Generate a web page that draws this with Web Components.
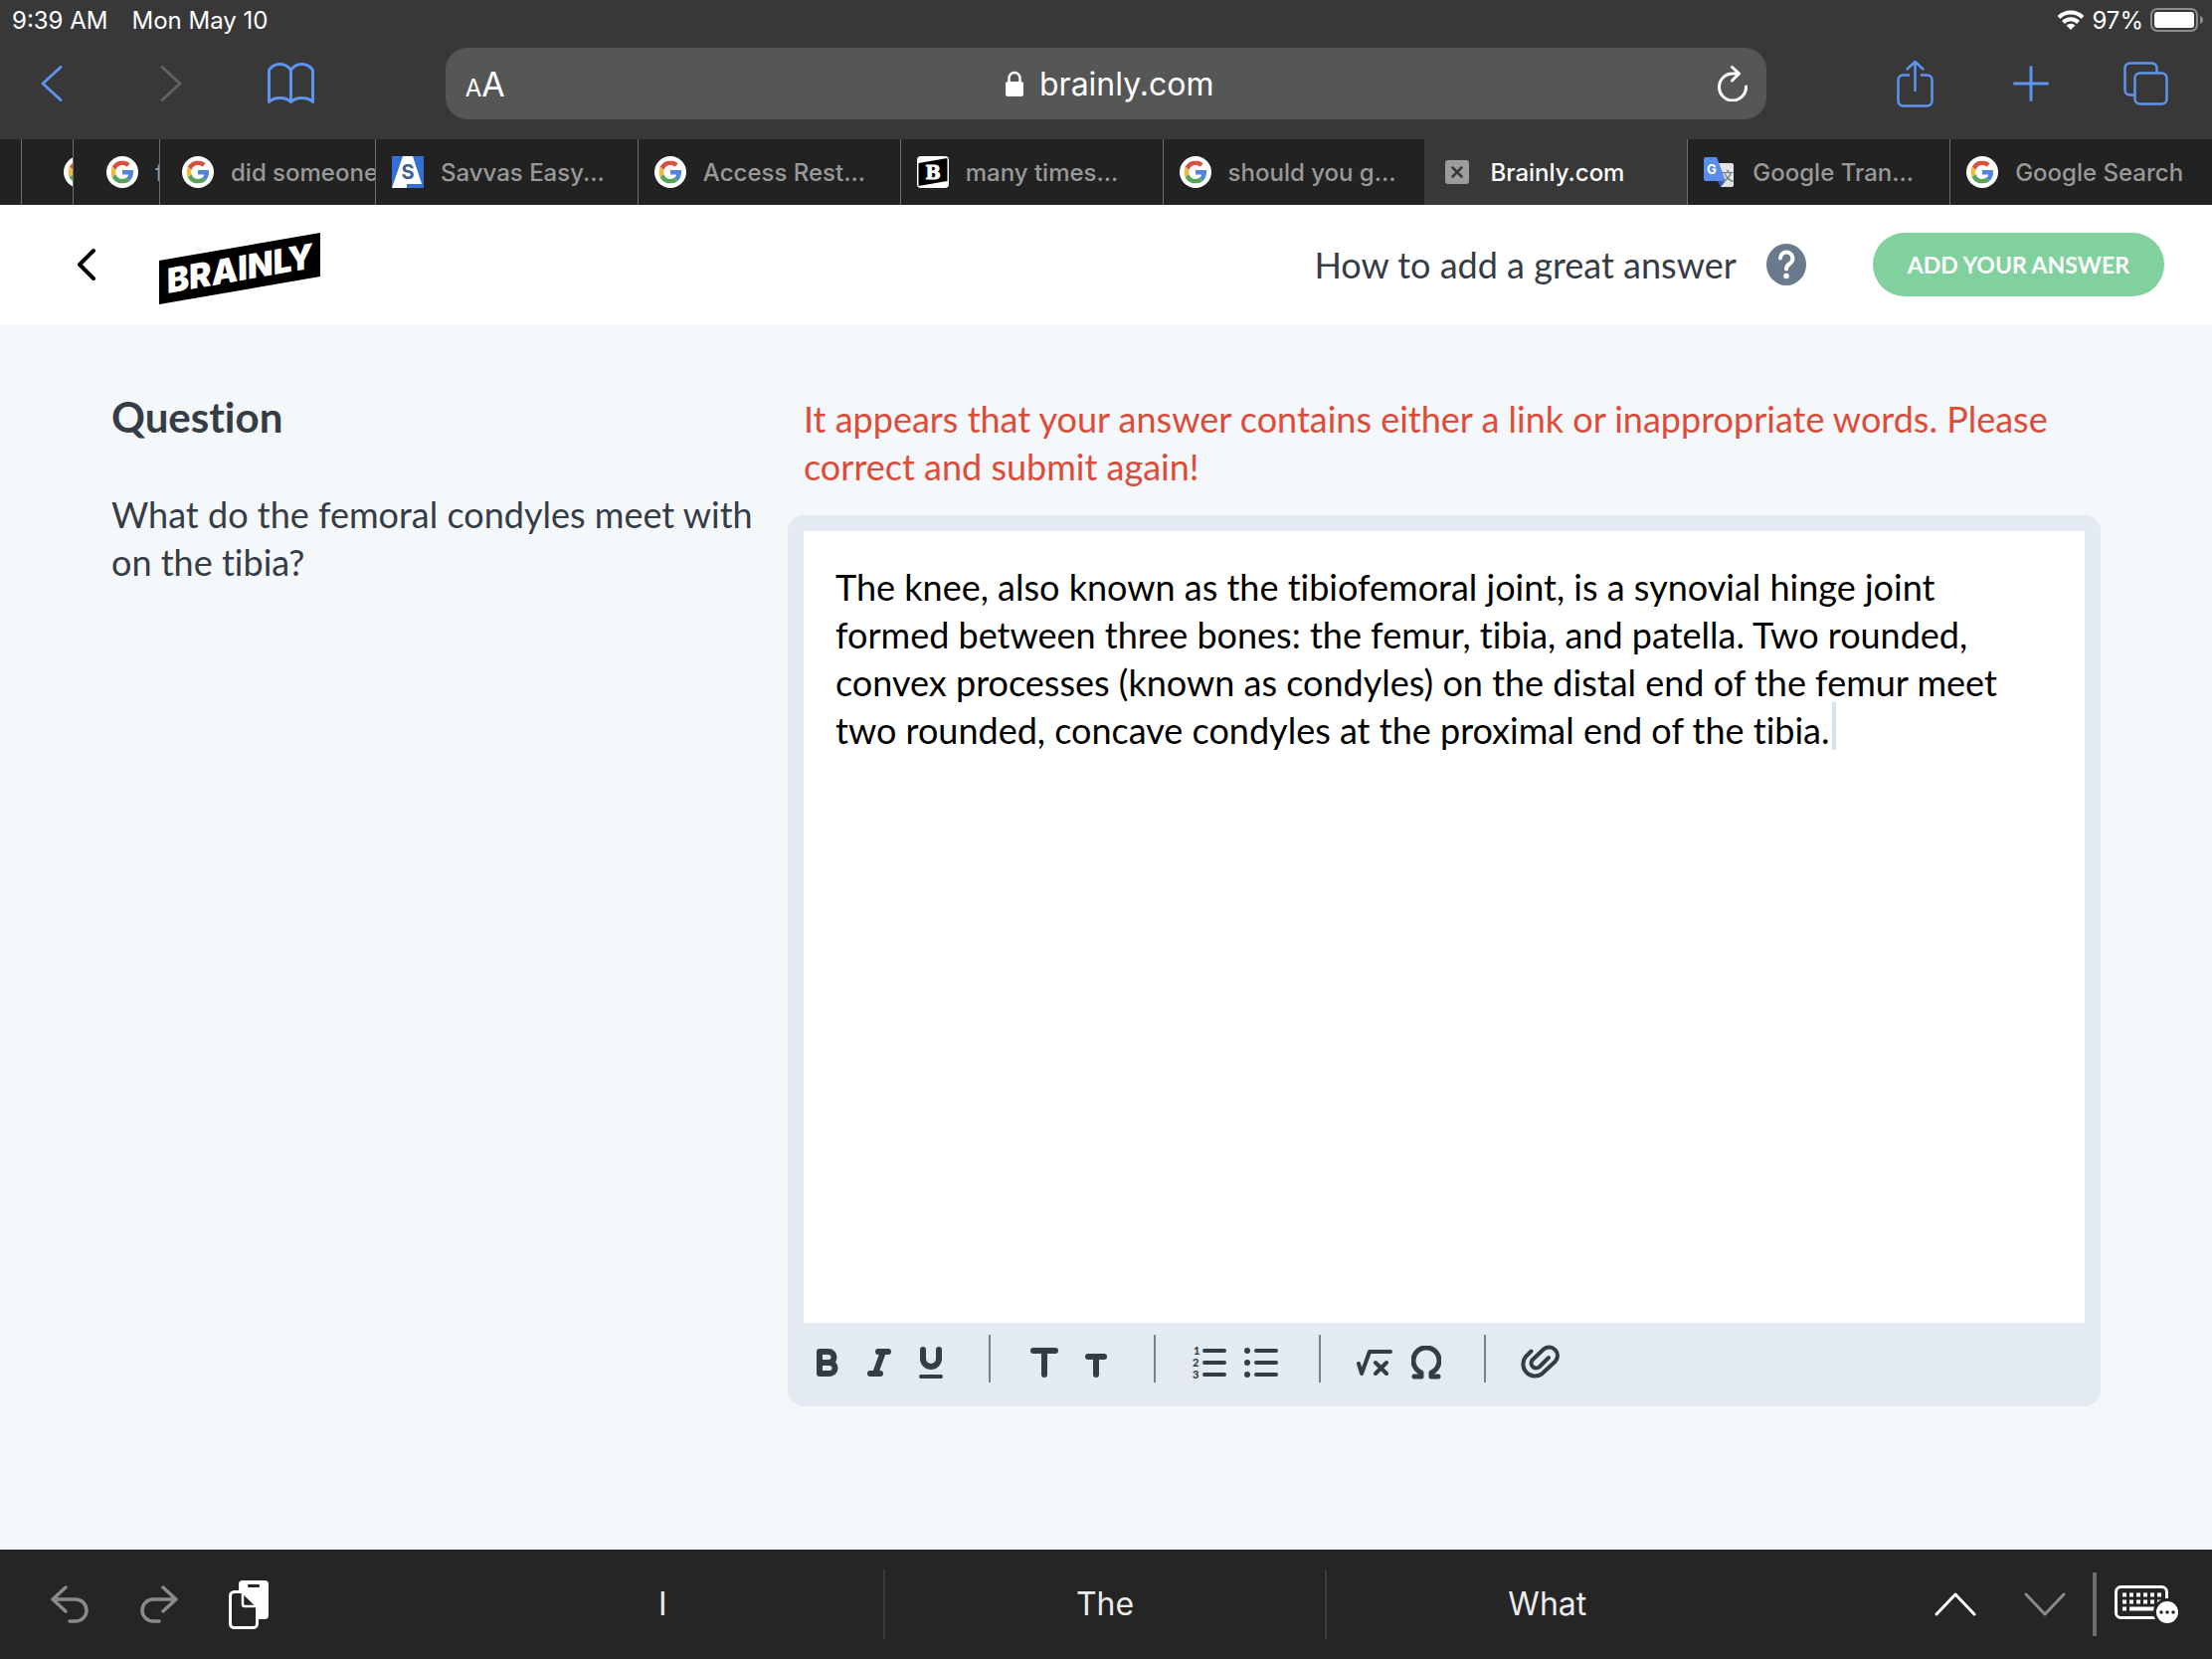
<!DOCTYPE html>
<html lang="en">
<head>
<meta charset="utf-8">
<meta name="viewport" content="width=device-width, initial-scale=1">
<title>Brainly.com</title>
<style>
	html, body {
		height: 100%;
	}

	body {
		margin: 0;
		display: flex;
		flex-direction: column;
		background: #f4f8fb;
		color: #353c46;
		font-family: Inter, "Liberation Sans", sans-serif;
	}
</style>
</head>
<body>
	<status-bar time="9:39 AM" date="Mon May 10" battery="97%"></status-bar>
	<browser-toolbar url="brainly.com"></browser-toolbar>
	<tab-strip>
		<browser-tab style="--width: 21px"></browser-tab>
		<browser-tab icon="google" style="--width: 52px; --inset: 42px"></browser-tab>
		<browser-tab icon="google" style="--width: 87px; --inset: 33px">f</browser-tab>
		<browser-tab icon="google" style="--width: 217px; --inset: 22px">did someone</browser-tab>
		<browser-tab icon="savvas">Savvas Easy...</browser-tab>
		<browser-tab icon="google">Access Rest...</browser-tab>
		<browser-tab icon="brainly">many times...</browser-tab>
		<browser-tab icon="google">should you g...</browser-tab>
		<browser-tab icon="close" active>Brainly.com</browser-tab>
		<browser-tab icon="translate">Google Tran...</browser-tab>
		<browser-tab icon="google">Google Search</browser-tab>
	</tab-strip>
	<site-header></site-header>
	<answer-page>
		<span slot="title">Question</span>
		<span slot="question">What do the femoral condyles meet with on the tibia?</span>
		<span slot="error">It appears that your answer contains either a link or inappropriate words. Please correct and submit again!</span>
		<answer-editor slot="editor" value="The knee, also known as the tibiofemoral joint, is a synovial hinge joint formed between three bones: the femur, tibia, and patella. Two rounded, convex processes (known as condyles) on the distal end of the femur meet two rounded, concave condyles at the proximal end of the tibia."></answer-editor>
	</answer-page>
	<shortcut-bar>
		<span>I</span>
		<span>The</span>
		<span>What</span>
	</shortcut-bar>

<script>
// [width, height, markup], drawn with currentColor strokes unless stated
const ICONS = {
	back: [22, 36, '<path d="M20 1.5 2 18 20 34.5" stroke-width="3"/>'],
	forward: [22, 36, '<path d="M2 1.5 20 18 2 34.5" stroke-width="3"/>'],
	book: [47, 42, '<path d="M1.5 39.5V7.5Q5.5 1.5 12.5 1.5T23.5 7.5Q27.5 1.5 34.5 1.5T45.5 7.5V39.5Q41.5 35.5 34.5 35.5T23.5 39.5Q19.5 35.5 12.5 35.5T1.5 39.5ZM23.5 7.5V39.5" stroke-width="3"/>'],
	lock: [18, 26, '<path d="M3.5 13V7.5a5.5 5.5 0 0 1 11 0V13" stroke-width="2.5"/><rect y="11" width="18" height="15" rx="2.5" fill="currentColor" stroke="none"/>'],
	reload: [30, 36, '<path d="M28.5 21A13.5 13.5 0 1 1 15 8H21M14.5 1.5 21.5 8 14.5 15" stroke-width="3"/>'],
	share: [37, 48, '<path d="M12 15.5H6.5a5 5 0 0 0-5 5V41.5a5 5 0 0 0 5 5H30.5a5 5 0 0 0 5-5V20.5a5 5 0 0 0-5-5H25M18.5 31V2M10.5 9.5 18.5 2 26.5 9.5"/>'],
	plus: [36, 36, '<path d="M18 1.5V34.5M1.5 18H34.5" stroke-width="3"/>'],
	tabs: [45, 44, '<rect x="11.5" y="11.5" width="32" height="31" rx="5"/><path d="M11 33.5H6.5a5 5 0 0 1-5-5V6.5a5 5 0 0 1 5-5H28.5a5 5 0 0 1 5 5V11"/>'],
	wifi: [28, 20, '<path d="M2 7.5A17 17 0 0 1 26 7.5M6.5 12.5A10.5 10.5 0 0 1 21.5 12.5" stroke-width="4" stroke-linecap="butt"/><path d="M14 20 9.5 15.5a6.5 6.5 0 0 1 9 0z" fill="currentColor" stroke="none"/>'],
	battery: [54, 24, '<rect x="1" y="1" width="46" height="22" rx="6" stroke="#8c8c8c" stroke-width="2"/><rect x="4" y="4" width="40" height="16" rx="3" fill="currentColor" stroke="none"/><path d="M50 8q3 1 3 4t-3 4z" fill="#8c8c8c" stroke="none"/>'],
	google: [32, 32, '<circle cx="16" cy="16" r="16" fill="#fff" stroke="none"/><svg x="4.5" y="4.5" width="23" height="23" viewBox="0 0 48 48" stroke="none"><path fill="#d9503f" d="M24 9.5c3.54 0 6.71 1.22 9.21 3.6l6.85-6.85C35.9 2.38 30.47 0 24 0 14.62 0 6.51 5.38 2.56 13.22l7.98 6.19C12.43 13.72 17.74 9.5 24 9.5z"/><path fill="#4f84df" d="M46.98 24.55c0-1.57-.15-3.09-.38-4.55H24v9.02h12.94c-.58 2.96-2.26 5.48-4.78 7.18l7.73 6c4.51-4.18 7.09-10.36 7.09-17.65z"/><path fill="#eebb3c" d="M10.53 28.59c-.48-1.45-.76-2.99-.76-4.59s.27-3.14.76-4.59l-7.98-6.19C.92 16.46 0 20.12 0 24c0 3.88.92 7.54 2.56 10.78l7.97-6.19z"/><path fill="#55a45a" d="M24 48c6.48 0 11.93-2.13 15.89-5.81l-7.73-6c-2.15 1.45-4.92 2.3-8.16 2.3-6.26 0-11.57-4.22-13.47-9.91l-7.98 6.19C6.51 42.62 14.62 48 24 48z"/></svg>'],
	savvas: [32, 32, '<g stroke="none"><rect width="32" height="32" fill="#3470d6"/><path fill="#fff" d="M11 0h10l9 28H15v4H0z"/><text x="16" y="23" text-anchor="middle" font-size="20" font-weight="700" fill="#3f5f96">S</text></g>'],
	brainly: [32, 32, '<g stroke="none"><rect width="32" height="32" rx="4" fill="#fff"/><path fill="#000" d="M1.5 7 30.5 2V25L1.5 30z"/><text x="16" y="23" text-anchor="middle" font-family="DejaVu Serif, serif" font-size="18" font-weight="700" fill="#fff" stroke="#fff" stroke-width="1">B</text></g>'],
	close: [32, 32, '<rect x="4" y="4" width="24" height="24" rx="3" fill="#9c9c9c" stroke="none"/><path d="m11.5 11.5 9 9m0-9-9 9" stroke="#383838"/>'],
	translate: [32, 32, '<g stroke="none"><path fill="#e4e4e4" d="M15 7h13a2 2 0 0 1 2 2V29a2 2 0 0 1-2 2H17z"/><path fill="#3c55b8" d="M14 25h8l-5 6z"/><path fill="#5a8cec" d="M2 1H13L22 25H2a2 2 0 0 1-2-2V3a2 2 0 0 1 2-2z"/><text x="3" y="18" font-size="13" font-weight="700" fill="#fff">G</text><text x="18" y="25" font-family="Noto Sans CJK SC, sans-serif" font-size="12" fill="#6c7a80">文</text></g>'],
	chevron: [20, 34, '<path d="M17 3 3 17 17 31" stroke-width="4"/>'],
	help: [40, 42, '<ellipse cx="20" cy="21" rx="20" ry="21" fill="currentColor" stroke="none"/><path d="M14 14.5a6.2 6.2 0 1 1 9.5 5.5c-2 1.4-3.5 2.6-3.5 5.5" stroke="#fff" stroke-width="4"/><circle cx="20" cy="32.5" r="2.8" fill="#fff" stroke="none"/>'],
	bold: [22, 28, '<path d="M3 3V25H13A5.5 5.5 0 0 0 13 14H3M3 3H12A5.5 5.5 0 0 1 12 14" stroke-width="6"/>'],
	italic: [24, 28, '<path d="M11 3H21M3 25H13M16 3 8 25" stroke-width="6"/>'],
	underline: [24, 32, '<path d="M4 3V12a8 8 0 0 0 16 0V3" stroke-width="6"/><path d="M2 30H22" stroke-width="4"/>'],
	big: [28, 30, '<path d="M3 3H25M14 3V27" stroke-width="6"/>'],
	small: [22, 30, '<path d="M3 9H19M11 9V27" stroke-width="6"/>'],
	numbers: [34, 34, '<path d="M12 5H32M12 17H32M12 29H32" stroke-width="4"/><g fill="currentColor" stroke="none" font-size="11" font-weight="900"><text x="1" y="9">1</text><text y="21">2</text><text y="33">3</text></g>'],
	bullets: [34, 34, '<path d="M12 5H32M12 17H32M12 29H32" stroke-width="4"/><path d="M3 5h0M3 17h0M3 29h0" stroke-width="6"/>'],
	root: [36, 30, '<path d="M2 16 5 26 13 4H34M19 15 30 26M30 15 19 26" stroke-width="4"/>'],
	omega: [30, 34, '<path d="M3 31H10V27A13 13 0 1 1 20 27V31H27" stroke-width="5"/>'],
	clip: [40, 36, '<path d="M11.5 6.5 6 12A12 12 0 0 0 22 29.5L35.5 17A8.5 8.5 0 0 0 24 4.5L12.5 15.5A5 5 0 0 0 19.5 22.5L29 13" stroke-width="4"/>'],
	undo: [38, 38, '<path d="M15 2 2 14 15 26M2 14H25a11 11 0 0 1 0 22H19" stroke-width="3.5"/>'],
	redo: [38, 38, '<path d="M23 2 36 14 23 26M36 14H13a11 11 0 0 0 0 22H19" stroke-width="3.5"/>'],
	paste: [40, 49, '<rect x="10" width="30" height="39" rx="4" fill="currentColor" stroke="none"/><rect x="19" y="4" width="12" height="3" rx="1" fill="#252525" stroke="none"/><path d="M5.5 11.5H14L28.5 26V43.5a4 4 0 0 1-4 4H5.5a4 4 0 0 1-4-4V15.5a4 4 0 0 1 4-4z" fill="#252525" stroke-width="3"/><path d="M14 12V24a2 2 0 0 0 2 2H28"/>'],
	up: [42, 24, '<path d="M2 22 21 2 40 22" stroke-width="3"/>'],
	down: [42, 24, '<path d="M2 2 21 22 40 2" stroke-width="3"/>'],
	keyboard: [65, 40, '<rect x="1.5" y="2.5" width="51" height="31" rx="5" stroke-width="3"/><path d="M8 10.5H48M8 17.5H48" stroke-width="4" stroke-dasharray="4 3" stroke-linecap="butt"/><path d="M8 24.5h4M15 24.5H41" stroke-width="4" stroke-linecap="butt"/><circle cx="53" cy="28" r="14" fill="#252525" stroke="none"/><circle cx="53" cy="28" r="11" fill="currentColor" stroke="none"/><path d="M47 28h0M53 28h0M59 28h0" stroke="#252525" stroke-width="3.5"/>']
}

class BaseElement extends HTMLElement {
	connectedCallback() {
		if (this.shadowRoot) {
			return
		}

		const root = this.attachShadow({mode: 'open'})
		root.innerHTML = `<style>
			:host, * {box-sizing: border-box}

			button {
				margin: 0;
				padding: 0;
				border: 0;
				background: none;
				color: inherit;
				font: inherit;
				cursor: pointer;
			}

			${this.styles()}
		</style>${this.markup()}`
	}
}

class UiIcon extends BaseElement {
	styles() {
		return `
			:host {
				display: inline-flex;
				flex: none;
			}
		`
	}

	markup() {
		const [width, height, shapes] = ICONS[this.getAttribute('name')]

		return `
			<svg
				width="${width}"
				height="${height}"
				viewBox="0 0 ${width} ${height}"
				fill="none"
				stroke="currentColor"
				stroke-width="2.5"
				stroke-linecap="round"
				stroke-linejoin="round"
				aria-hidden="true"
			>${shapes}</svg>
		`
	}
}

// Button around one icon, size comes from --w and --h
class IconButton extends BaseElement {
	styles() {
		return `
			:host {
				display: block;
				flex: none;
			}

			button {
				display: flex;
				align-items: center;
				justify-content: center;
				width: var(--w, 56px);
				height: var(--h, 72px);
			}
		`
	}

	markup() {
		return `
			<button type="button" aria-label="${this.getAttribute('label')}">
				<ui-icon name="${this.getAttribute('icon')}"></ui-icon>
			</button>
		`
	}
}

class StatusBar extends BaseElement {
	styles() {
		return `
			:host {
				display: flex;
				flex: none;
				align-items: center;
				gap: 24px;
				height: 40px;
				padding: 0 8px 0 12px;
				background: #383838;
				color: #fff;
				font-size: 24px;
			}

			.right {
				display: flex;
				align-items: center;
				gap: 7px;
				margin-left: auto;
			}
		`
	}

	markup() {
		return `
			<span>${this.getAttribute('time')}</span>
			<span>${this.getAttribute('date')}</span>
			<div class="right">
				<ui-icon name="wifi"></ui-icon>
				<span>${this.getAttribute('battery')}</span>
				<ui-icon name="battery"></ui-icon>
			</div>
		`
	}
}

class BrowserToolbar extends BaseElement {
	styles() {
		return `
			:host {
				display: grid;
				flex: none;
				grid-template-columns: 1fr 3fr 1fr;
				padding: 8px 0 20px;
				background: #383838;
				color: #5f94ee;
			}

			.left, .right {
				display: flex;
				gap: 60px;
			}

			.left {
				padding-left: 24px;
				gap: 64px;
			}

			.right {
				justify-content: flex-end;
				padding-right: 38px;
			}

			.disabled {
				color: #636363;
			}

			.field {
				display: grid;
				grid-template-columns: 1fr auto 1fr;
				align-items: center;
				margin: 0 3px;
				padding: 0 4px 0 20px;
				border-radius: 22px;
				background: #555756;
				color: #fff;
			}

			.size {
				justify-self: start;
				font-size: 34px;
			}

			.size small {
				font-size: 24px;
			}

			.address {
				display: flex;
				align-items: center;
				gap: 16px;
			}

			input {
				width: 184px;
				padding: 0;
				border: 0;
				outline: 0;
				background: none;
				color: inherit;
				font: 32px Inter, sans-serif;
			}

			.reload {
				justify-self: end;
				--w: 60px;
			}
		`
	}

	markup() {
		return `
			<div class="left">
				<icon-button icon="back" label="Back"></icon-button>
				<icon-button class="disabled" icon="forward" label="Forward"></icon-button>
				<icon-button icon="book" label="Bookmarks"></icon-button>
			</div>
			<div class="field">
				<button class="size" type="button"><small>A</small>A</button>
				<label class="address">
					<ui-icon name="lock"></ui-icon>
					<input type="text" aria-label="Address" value="${this.getAttribute('url')}">
				</label>
				<icon-button class="reload" icon="reload" label="Reload"></icon-button>
			</div>
			<div class="right">
				<icon-button icon="share" label="Share"></icon-button>
				<icon-button icon="plus" label="New tab"></icon-button>
				<icon-button icon="tabs" label="All tabs"></icon-button>
			</div>
		`
	}
}

class TabStrip extends BaseElement {
	styles() {
		return `
			:host {
				display: flex;
				flex: none;
				height: 66px;
				background: #222;
				overflow: hidden;
			}
		`
	}

	markup() {
		return '<slot></slot>'
	}
}

class BrowserTab extends BaseElement {
	styles() {
		return `
			:host {
				display: block;
				flex: 1 0 var(--width, 0);
				max-width: var(--width, none);
				min-width: 0;
				overflow: hidden;
				border-left: 1px solid #6e6e6e;
				color: #999;
			}

			:host(:first-child) {
				border-left: 0;
			}

			:host([active]) {
				border-color: #383838;
				background: #383838;
				color: #fff;
			}

			button {
				display: flex;
				align-items: center;
				gap: 17px;
				width: 100%;
				height: 100%;
				padding-left: var(--inset, 16px);
				font-size: 24px;
				font-weight: 500;
				white-space: nowrap;
			}
		`
	}

	markup() {
		const icon = this.getAttribute('icon')

		if (!icon) {
			return ''
		}

		return `<button type="button"><ui-icon name="${icon}"></ui-icon><slot></slot></button>`
	}
}

class SiteHeader extends BaseElement {
	styles() {
		return `
			:host {
				display: flex;
				flex: none;
				align-items: center;
				height: 121px;
				padding: 0 48px 2px 64px;
				background: #fff;
				font-family: Lato, sans-serif;
			}

			.back {
				--w: 46px;
				color: #000;
			}

			.logo {
				display: flex;
				margin: 8px 0 0 50px;
			}

			.logo text {
				font: italic 900 34px Inter, sans-serif;
			}

			.how {
				display: flex;
				align-items: center;
				gap: 30px;
				margin-left: auto;
				color: inherit;
				font-size: 36px;
				text-decoration: none;
			}

			.how ui-icon {
				color: #6a7a8c;
			}

			.submit {
				height: 64px;
				margin-left: 67px;
				padding: 0 35px;
				border-radius: 32px;
				background: #80d19e;
				color: #fff;
				font-size: 23px;
				font-weight: 700;
			}
		`
	}

	markup() {
		return `
			<icon-button class="back" icon="chevron" label="Back to question"></icon-button>
			<a class="logo" href="#" aria-label="Brainly">
				<svg width="162" height="72" viewBox="0 0 162 72">
					<path d="M0 28 162 0V44L0 72z"/>
					<text x="81" y="48" text-anchor="middle" fill="#fff" transform="rotate(-10 81 36)">BRAINLY</text>
				</svg>
			</a>
			<a class="how" href="#">How to add a great answer<ui-icon name="help"></ui-icon></a>
			<button class="submit" type="button">ADD YOUR ANSWER</button>
		`
	}
}

class AnswerPage extends BaseElement {
	styles() {
		return `
			:host {
				display: grid;
				flex: 1;
				grid-template-columns: 33% 1fr;
				gap: 20px;
				min-height: 0;
				padding: 68px 112px 144px;
				font: 36px/48px Lato, sans-serif;
				font-variant-ligatures: none;
			}

			h1 {
				margin: 0 0 50px;
				font-size: 42px;
				line-height: 48px;
			}

			p {
				margin: 0;
			}

			.answer {
				display: flex;
				flex-direction: column;
				min-height: 0;
			}

			.error {
				padding: 2px 16px 25px;
				color: #dd4b39;
			}
		`
	}

	markup() {
		return `
			<section>
				<h1><slot name="title"></slot></h1>
				<p><slot name="question"></slot></p>
			</section>
			<section class="answer">
				<p class="error"><slot name="error"></slot></p>
				<slot name="editor"></slot>
			</section>
		`
	}
}

class AnswerEditor extends BaseElement {
	styles() {
		return `
			:host {
				position: relative;
				display: flex;
				flex: 1;
				flex-direction: column;
				min-height: 0;
				padding: 16px 16px 0;
				border-radius: 16px;
				background: #e3eaf1;
			}

			textarea {
				flex: 1;
				padding: 32px 40px 32px 32px;
				border: 0;
				outline: 0;
				resize: none;
				background: #fff;
				color: #000;
				font: inherit;
				font-variant-ligatures: none;
			}

			.caret {
				position: absolute;
				top: 188px;
				left: 1050px;
				width: 4px;
				height: 48px;
				background: #d3e0f7;
			}

			.tools {
				display: flex;
				height: 84px;
				margin-left: -2px;
				padding-top: 12px;
				--w: 52px;
				--h: 56px;
			}

			hr {
				width: 2px;
				height: 48px;
				margin: 0 28px 0 32px;
				border: 0;
				background: #75818e;
			}
		`
	}

	markup() {
		const groups = [
			['bold', 'italic', 'underline'],
			['big', 'small'],
			['numbers', 'bullets'],
			['root', 'omega'],
			['clip']
		]
		const tools = groups.map(group => group.map(name => (
			`<icon-button icon="${name}" label="${name}"></icon-button>`
		)).join('')).join('<hr>')

		return `
			<textarea aria-label="Your answer" spellcheck="false">${this.getAttribute('value')}</textarea>
			<span class="caret"></span>
			<div class="tools">${tools}</div>
		`
	}
}

class ShortcutBar extends BaseElement {
	styles() {
		return `
			:host {
				display: grid;
				flex: none;
				grid-template-columns: 1fr 3fr 1fr;
				align-items: center;
				height: 110px;
				background: #252525;
				color: #fff;
				--w: 90px;
			}

			.left, .right {
				display: flex;
				align-items: center;
			}

			.left {
				padding-left: 25px;
			}

			.right {
				justify-content: flex-end;
				padding-right: 33px;
			}

			.words {
				display: grid;
				grid-template-columns: repeat(3, 1fr);
			}

			::slotted(span) {
				border-right: 2px solid #3b3b3b;
				color: #ececec;
				font-size: 32px;
				line-height: 70px;
				text-align: center;
			}

			::slotted(span:last-child) {
				border-color: transparent;
			}

			.disabled {
				color: #8a8a8a;
			}

			hr {
				width: 4px;
				height: 64px;
				margin: 0 18px 0 3px;
				border: 0;
				background: #6c6c6c;
			}

			.keyboard {
				--w: 65px;
			}
		`
	}

	markup() {
		return `
			<div class="left">
				<icon-button class="disabled" icon="undo" label="Undo"></icon-button>
				<icon-button class="disabled" icon="redo" label="Redo"></icon-button>
				<icon-button icon="paste" label="Paste"></icon-button>
			</div>
			<div class="words"><slot></slot></div>
			<div class="right">
				<icon-button icon="up" label="Previous field"></icon-button>
				<icon-button class="disabled" icon="down" label="Next field"></icon-button>
				<hr>
				<icon-button class="keyboard" icon="keyboard" label="Keyboard"></icon-button>
			</div>
		`
	}
}

customElements.define('ui-icon', UiIcon)
customElements.define('icon-button', IconButton)
customElements.define('status-bar', StatusBar)
customElements.define('browser-toolbar', BrowserToolbar)
customElements.define('tab-strip', TabStrip)
customElements.define('browser-tab', BrowserTab)
customElements.define('site-header', SiteHeader)
customElements.define('answer-page', AnswerPage)
customElements.define('answer-editor', AnswerEditor)
customElements.define('shortcut-bar', ShortcutBar)
</script>
</body>
</html>
